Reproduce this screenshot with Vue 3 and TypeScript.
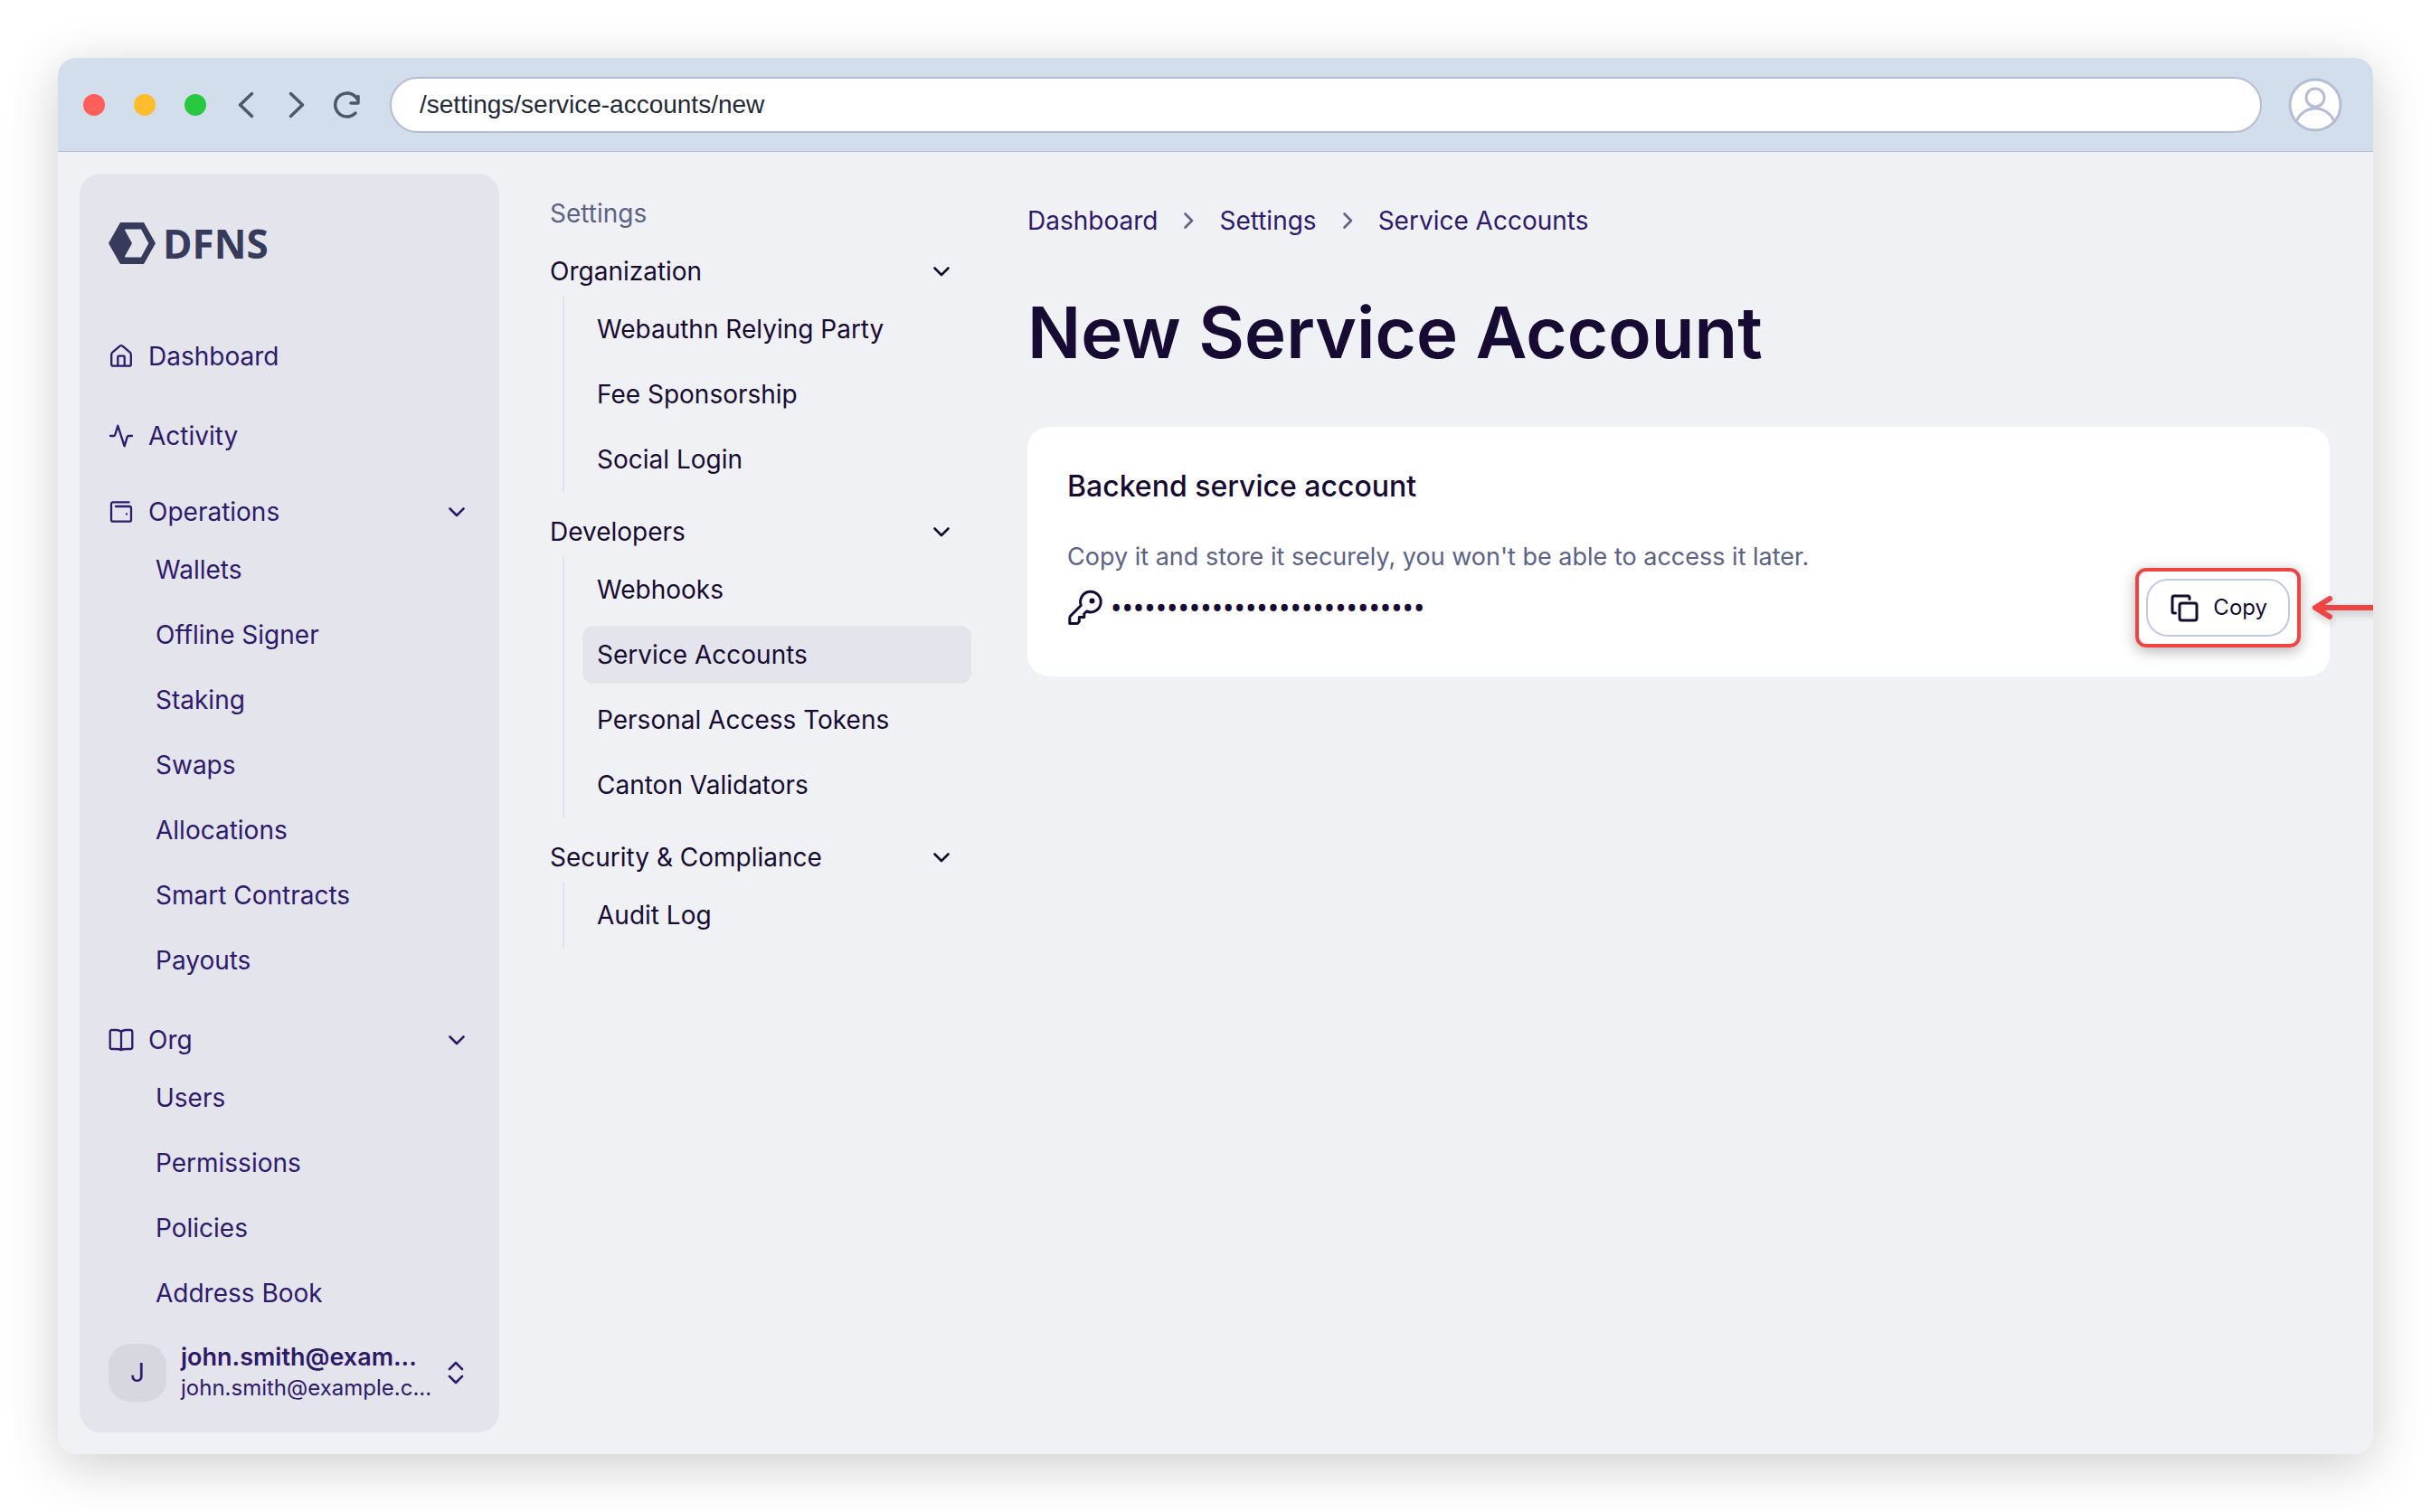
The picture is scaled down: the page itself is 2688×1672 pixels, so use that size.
<script setup lang="ts">
interface Group {
  title: string
  icon?: string
  items: string[]
}

const operations: Group[] = [
  {
    title: 'Operations',
    icon: 'M22.7 3.3H5a2 2 0 0 0-2 2V22.7a2 2 0 0 0 2 2H23a2 2 0 0 0 2-2V10a2 2 0 0 0-2-2H8M20 16.5h.01',
    items: ['Wallets', 'Offline Signer', 'Staking', 'Swaps', 'Allocations', 'Smart Contracts', 'Payouts'],
  },
  {
    title: 'Org',
    icon: 'M14 5.2Q12.5 3 8.5 3H3.7Q1.7 3 1.7 5V22Q1.7 24 3.7 24H8Q12.5 24 14 25Q15.500 24 20 24H24.300Q26.300 24 26.300 22V5Q26.300 3 24.300 3H19.500Q15.500 3 14 5.2V25',
    items: ['Users', 'Permissions', 'Policies', 'Address Book'],
  },
]

const links = [
  {
    title: 'Dashboard',
    icon: 'M3.2 12Q3.2 10.500 4.300 9.600L12.600 2.700Q14 1.600 15.400 2.700L23.700 9.600Q24.800 10.500 24.800 12V22.700a2 2 0 0 1-2 2H5.200a2 2 0 0 1-2-2ZM10.300 24.700V14.700a1 1 0 0 1 1-1h5.400a1 1 0 0 1 1 1V24.700',
  },
  {
    title: 'Activity',
    icon: 'M2 14H5.600Q6.800 14 7.200 12.800L10.300 2.800L17.600 25.300L20.700 15.200Q21.100 14 22.300 14H26',
  },
]

const settings: Group[] = [
  { title: 'Organization', items: ['Webauthn Relying Party', 'Fee Sponsorship', 'Social Login'] },
  { title: 'Developers', items: ['Webhooks', 'Service Accounts', 'Personal Access Tokens', 'Canton Validators'] },
  { title: 'Security & Compliance', items: ['Audit Log'] },
]

const active = 'Service Accounts'
const crumbs = ['Dashboard', 'Settings', 'Service Accounts']
const secret = '•'.repeat(28)
</script>

<template>
  <div class="page">
    <div class="window">
      <header class="toolbar">
        <div class="lights"><i class="red"></i><i class="amber"></i><i class="green"></i></div>
        <div class="controls">
          <button type="button" aria-label="Back">
            <svg viewBox="0 0 32 32"><path d="M22.500 3.500L9.500 16L22.500 28.500" /></svg>
          </button>
          <button type="button" aria-label="Forward">
            <svg viewBox="0 0 32 32"><path d="M9.500 3.500L22.500 16L9.500 28.500" /></svg>
          </button>
          <button type="button" aria-label="Reload">
            <svg viewBox="0 0 32 32"><path d="M25 25A13 13 0 1 1 27 9.500M28 6.500V14H20" /></svg>
          </button>
        </div>
        <input class="address" type="text" aria-label="Address" value="/settings/service-accounts/new" />
        <button type="button" class="person" aria-label="Profile">
          <svg viewBox="0 0 60 60">
            <circle cx="30" cy="30" r="28" />
            <circle cx="30" cy="22" r="10" />
            <path d="M9 48.500A22.500 22.500 0 0 1 51 48.500" />
          </svg>
        </button>
      </header>

      <div class="body">
        <aside class="sidebar">
          <a class="logo" href="#">
            <svg viewBox="0 0 52 46">
              <path fill-rule="evenodd" d="M13 0H39L52 23L39 46H13L0 23ZM19 7.500Q17.500 7.500 18.300 9L26 23L18.300 37Q17.500 38.500 19 38.500H36L44.300 23L36 7.500Z" />
            </svg>
            <span>DFNS</span>
          </a>
          <nav class="menu" aria-label="Main">
            <a v-for="l in links" :key="l.title" class="top-link" href="#">
              <svg class="icon" viewBox="0 0 28 28"><path :d="l.icon" /></svg>{{ l.title }}
            </a>
            <section v-for="g in operations" :key="g.title">
              <button type="button" class="group">
                <svg class="icon" viewBox="0 0 28 28"><path :d="g.icon" /></svg>
                <span>{{ g.title }}</span>
                <svg class="chevron" viewBox="0 0 28 28"><path d="M6.500 10.500L14 18L21.500 10.500" /></svg>
              </button>
              <ul>
                <li v-for="i in g.items" :key="i"><a href="#">{{ i }}</a></li>
              </ul>
            </section>
          </nav>
          <button type="button" class="account">
            <span class="initial">J</span>
            <span class="who"><strong>john.smith@exam...</strong><small>john.smith@example.c...</small></span>
            <svg class="chevron" viewBox="0 0 28 28"><path d="M6 10L13 3L20 10M6 18L13 25L20 18" /></svg>
          </button>
        </aside>

        <nav class="settings" aria-label="Settings">
          <p>Settings</p>
          <section v-for="g in settings" :key="g.title">
            <button type="button" class="group">
              <span>{{ g.title }}</span>
              <svg class="chevron" viewBox="0 0 28 28"><path d="M6.500 10.500L14 18L21.500 10.500" /></svg>
            </button>
            <ul>
              <li v-for="i in g.items" :key="i"><a href="#" :class="{ active: i === active }">{{ i }}</a></li>
            </ul>
          </section>
        </nav>

        <main>
          <nav class="crumbs" aria-label="Breadcrumb">
            <template v-for="(c, n) in crumbs" :key="c">
              <svg v-if="n" class="chevron" viewBox="0 0 28 28"><path d="M10.500 6.500L18 14L10.500 21.500" /></svg>
              <a href="#">{{ c }}</a>
            </template>
          </nav>
          <h1>New Service Account</h1>
          <section class="card">
            <h2>Backend service account</h2>
            <p>Copy it and store it securely, you won't be able to access it later.</p>
            <div class="token">
              <svg class="key" viewBox="0 0 40 40">
                <path d="M2.800 37.500V31.500Q2.800 30 4 28.800L15.300 17.500A11.300 11.300 0 1 1 21.500 24L18.800 26.800V30.500H13.300V35.500L11.300 37.500Z" />
                <circle cx="27.500" cy="12.500" r="1.500" />
              </svg>
              <span class="secret">{{ secret }}</span>
              <div class="spot">
                <button type="button" class="copy">
                  <svg viewBox="0 0 32 32">
                    <rect x="11" y="11" width="19" height="19" rx="2.500" />
                    <path d="M6.500 22H5Q3 22 3 20V5Q3 3 5 3H20Q22 3 22 5V6.500" />
                  </svg>
                  Copy
                </button>
                <svg class="arrow" viewBox="0 0 88 40"><path d="M90 20H8M24 10L8 20L24 30" /></svg>
              </div>
            </div>
          </section>
        </main>
      </div>
    </div>
  </div>
</template>

<style>
body {
  margin: 0;
  background: #fff;
}
</style>

<style scoped>
* {
  box-sizing: border-box;
}
.page {
  display: flex;
  min-height: 100vh;
  padding: 64px;
  font-family: Inter, "Liberation Sans", sans-serif;
  font-size: 28px;
  line-height: 40px;
  color: #170b33;
}
.window {
  flex: 1;
  display: flex;
  flex-direction: column;
  min-width: 0;
  overflow: hidden;
  background: #f0f1f5;
  border-radius: 20px;
  box-shadow: 0 12px 60px rgba(0, 0, 0, 0.2);
}
button {
  padding: 0;
  border: 0;
  background: none;
  font: inherit;
  color: inherit;
  text-align: left;
}
a {
  color: inherit;
  text-decoration: none;
}
svg {
  display: block;
  flex: none;
  fill: none;
  stroke: currentColor;
  stroke-linecap: round;
  stroke-linejoin: round;
}
h1,
h2,
p,
ul {
  margin: 0;
  padding: 0;
  list-style: none;
}

.toolbar {
  display: flex;
  align-items: center;
  height: 104px;
  padding: 0 34px 0 28px;
  background: #d3deec;
  border-bottom: 1px solid #b4c0d6;
}
.lights {
  display: flex;
  gap: 32px;
  margin-right: 28px;
}
.lights i {
  width: 24px;
  height: 24px;
  border-radius: 50%;
}
.red {
  background: #ff5f57;
}
.amber {
  background: #ffbd2e;
}
.green {
  background: #28c840;
}
.controls {
  display: flex;
  gap: 24px;
  margin-right: 31px;
  color: #4f5767;
}
.controls svg {
  width: 32px;
  height: 32px;
  stroke-width: 3.5;
}
.address {
  flex: 1;
  min-width: 0;
  height: 62px;
  padding: 0 31px;
  border: 2px solid #b5bdd6;
  border-radius: 31px;
  background: #fff;
  color: #1f2937;
  font: 28px "Liberation Sans", Arial, sans-serif;
}
.person {
  margin-left: 29px;
  color: #b5bdd6;
}
.person svg {
  width: 60px;
  height: 60px;
  fill: #fff;
  stroke-width: 3;
}

.body {
  flex: 1;
  display: flex;
  padding: 24px 48px 24px 24px;
}
.sidebar {
  flex: none;
  display: flex;
  flex-direction: column;
  width: 464px;
  padding: 54px 33px 34px 32px;
  background: #e4e4ed;
  border-radius: 24px;
  color: #2e1a6b;
}
.logo {
  display: flex;
  align-items: center;
  gap: 8px;
  height: 46px;
  margin-bottom: 70px;
  color: #363a5b;
  font: 700 44px "Open Sans", sans-serif;
}
.logo svg {
  width: 52px;
  height: 46px;
  fill: currentColor;
  stroke: none;
}
.menu {
  display: flex;
  flex-direction: column;
  gap: 24px;
}
.top-link {
  display: flex;
  align-items: center;
  gap: 16px;
  height: 64px;
}
.icon {
  width: 28px;
  height: 28px;
  stroke-width: 2.3;
}
.chevron {
  width: 28px;
  height: 28px;
  stroke-width: 2.6;
}
.group {
  display: flex;
  align-items: center;
  gap: 16px;
  width: 100%;
  height: 56px;
}
.group span {
  flex: 1;
}
.menu ul {
  margin-left: 13px;
  padding-left: 21px;
  border-left: 2px solid #e0e4ef;
}
li {
  padding: 4px 0;
}
li a {
  display: block;
  padding: 12px 16px;
  border-radius: 12px;
}
.active {
  background: #e4e4ed;
}
.account {
  display: flex;
  align-items: center;
  height: 64px;
  margin-top: auto;
}
.initial {
  width: 64px;
  height: 64px;
  margin-right: 16px;
  border-radius: 24px;
  background: #d7d7e0;
  line-height: 64px;
  text-align: center;
}
.who {
  flex: 1;
  min-width: 0;
  white-space: nowrap;
}
.who strong,
.who small {
  display: block;
  line-height: 34px;
}
.who strong {
  font-size: 27px;
  font-weight: 600;
}
.who small {
  font-size: 24px;
}

.settings {
  flex: none;
  width: 466px;
  margin: 16px 62px 0 56px;
}
.settings p {
  margin-bottom: 8px;
  line-height: 56px;
  color: #5c6285;
}
.settings section {
  margin-bottom: 16px;
}
.settings .group {
  padding-right: 19px;
}
.settings ul {
  margin-left: 14px;
  padding-left: 20px;
  border-left: 2px solid #dfe1ef;
}

main {
  flex: 1;
  min-width: 0;
}
.crumbs {
  display: flex;
  align-items: center;
  gap: 20px;
  margin-top: 32px;
  color: #2e1a6b;
}
.crumbs svg {
  color: #5c6285;
}
h1 {
  margin: 56px 0 56px;
  font-size: 78px;
  font-weight: 600;
  line-height: 96px;
}
.card {
  padding: 44px;
  background: #fff;
  border-radius: 24px;
}
h2 {
  margin-bottom: 36px;
  font-size: 32px;
  font-weight: 500;
  line-height: 44px;
}
.card p {
  margin-bottom: 4px;
  font-size: 27px;
  color: #5c6285;
}
.token {
  display: flex;
  align-items: center;
  height: 64px;
}
.key {
  width: 40px;
  height: 40px;
  stroke-width: 3;
}
.secret {
  margin-left: 8px;
  font-family: "Noto Sans", sans-serif;
  font-size: 33px;
  line-height: 44px;
}
.spot {
  position: relative;
  margin: 0 -12px 0 auto;
  padding: 8px;
  border: 4px solid #ef4444;
  border-radius: 12px;
  box-shadow: 0 4px 16px rgba(0, 0, 0, 0.3);
}
.copy {
  display: flex;
  align-items: center;
  gap: 16px;
  height: 64px;
  padding: 0 23px 0 24px;
  border: 2px solid #c5c9e0;
  border-radius: 24px;
  font-size: 24px;
}
.copy svg {
  width: 32px;
  height: 32px;
  stroke-width: 3;
}
.arrow {
  position: absolute;
  top: 20px;
  left: 100%;
  width: 88px;
  height: 40px;
  margin-left: 12px;
  color: #ef4444;
  stroke-width: 6;
  filter: drop-shadow(0 4px 4px rgba(0, 0, 0, 0.2));
}
</style>
